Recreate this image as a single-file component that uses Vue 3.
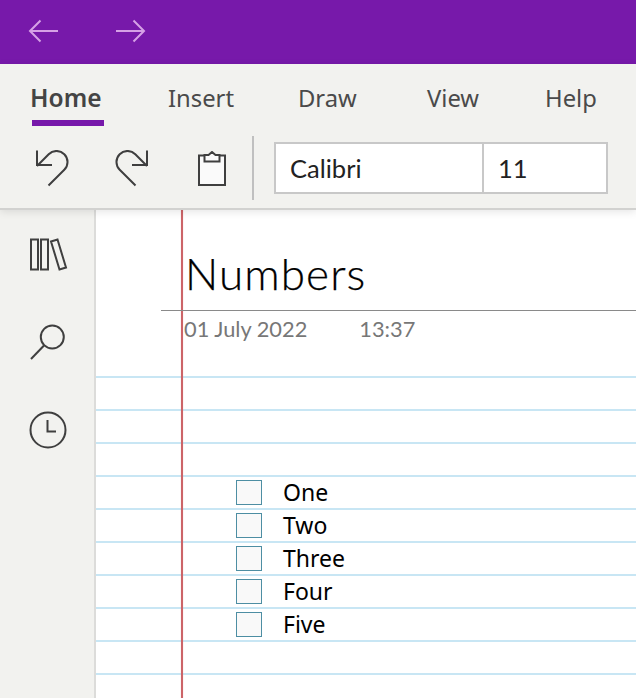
<script setup>
const tabs = [
  { name: 'Home', width: 138, active: true },
  { name: 'Insert', width: 130 },
  { name: 'Draw', width: 129 },
  { name: 'View', width: 118 },
  { name: 'Help', width: 60 },
];
const todos = ['One', 'Two', 'Three', 'Four', 'Five'];
</script>

<template>
  <div class="app">
    <header class="titlebar">
      <svg class="nav-icon" width="32" height="24" viewBox="0 0 32 24">
        <path d="M30 12H2M12.5 1.5L2 12l10.5 10.5" />
      </svg>
      <svg class="nav-icon" width="32" height="24" viewBox="0 0 32 24">
        <path d="M2 12h28M19.5 1.5L30 12 19.5 22.5" />
      </svg>
    </header>

    <section class="ribbon">
      <nav class="tabs">
        <div v-for="tab in tabs" :key="tab.name" class="tab" :class="{ active: tab.active }" :style="{ width: tab.width + 'px' }">
          <span class="tab-label">{{ tab.name }}</span>
        </div>
      </nav>
      <div class="tools">
        <svg class="tool" width="36" height="40" viewBox="0 0 36 40">
          <path d="M1 .5V15H16M1 16L12.700 4.200A11 11 0 0 1 28.300 19.800L12.500 35.500" />
        </svg>
        <svg class="tool redo" width="36" height="40" viewBox="0 0 36 40">
          <path d="M35 .5V15H20M35 16L23.300 4.200A11 11 0 0 0 7.700 19.800L23.500 35.500" />
        </svg>
        <svg class="tool clip" width="30" height="36" viewBox="0 0 30 36">
          <path class="paper" d="M7 4.500H1V34H27V4.500H21" />
          <path class="paper" d="M6.500 10.500V4H10.500L14 1l3.500 3H21.500V10.500z" />
        </svg>
        <div class="separator"></div>
        <div class="font-box">
          <div class="font-name">Calibri</div>
          <div class="font-size">11</div>
        </div>
      </div>
    </section>

    <main class="body">
      <aside class="sidebar">
        <svg width="40" height="36" viewBox="0 0 40 36">
          <path d="M1 1.500h7v30H1zM11 1.500h7v30H11zM21 3.500l6.500-2L36 29.500l-6.500 2z" />
        </svg>
        <svg class="search" width="40" height="40" viewBox="0 0 40 40">
          <circle cx="24.300" cy="14" r="11.500" />
          <path d="M16 22.500L3 36" />
        </svg>
        <svg class="clock" width="40" height="40" viewBox="0 0 40 40">
          <circle cx="20" cy="20" r="17.500" />
          <path d="M19.500 10v11.500H28" />
        </svg>
      </aside>

      <div class="page">
        <div class="margin-line"></div>
        <div class="page-head">
          <h1 class="title">Numbers</h1>
          <div class="meta">
            <span>01 July 2022</span>
            <span>13:37</span>
          </div>
        </div>
        <ul class="todo-list">
          <li v-for="item in todos" :key="item" class="todo">
            <span class="checkbox"></span>
            <span class="todo-text">{{ item }}</span>
          </li>
        </ul>
      </div>
    </main>
  </div>
</template>

<style>
html,
body {
  margin: 0;
  background: #fff;
}
</style>

<style scoped>
.app {
  width: 636px;
  height: 698px;
  overflow: hidden;
  display: flex;
  flex-direction: column;
  font-family: "Noto Sans", "Open Sans", sans-serif;
}

.titlebar {
  height: 64px;
  background: #7719aa;
  display: flex;
  align-items: center;
  gap: 54px;
  padding-left: 28px;
  box-sizing: border-box;
}

.nav-icon {
  margin-top: -2px;
}

.nav-icon path {
  fill: none;
  stroke: #d6a1e6;
  stroke-width: 2;
}

.ribbon {
  height: 146px;
  box-sizing: border-box;
  background: #f2f2ef;
  border-bottom: 2px solid #d2d2d0;
  position: relative;
  z-index: 1;
  box-shadow: 0 2px 8px rgba(0, 0, 0, 0.1);
}

.tabs {
  display: flex;
  height: 62px;
  padding-left: 30px;
  box-sizing: border-box;
}

.tab {
  font-size: 23.8px;
  line-height: 34px;
  padding-top: 17px;
  color: #4a4a4a;
}

.tab-label {
  display: inline-block;
  height: 45px;
  box-sizing: border-box;
  position: relative;
}

.tab.active .tab-label {
  font-weight: 600;
  font-size: 24.5px;
  color: #444;
}

.tab.active .tab-label::after {
  content: "";
  position: absolute;
  left: 2px;
  bottom: 0;
  width: 72px;
  height: 6px;
  background: #7719aa;
}

.tools {
  display: flex;
  align-items: flex-start;
  padding-left: 36px;
}

.tool path,
.sidebar path,
.sidebar circle {
  fill: none;
  stroke: #3f3f3f;
  stroke-width: 2;
}

.tool {
  margin-top: 24px;
  margin-right: 40px;
}

.tool.redo {
  margin-right: 50px;
}

.tool.clip {
  margin-top: 25px;
  margin-right: 24px;
}

.tool .paper {
  fill: #fafafa;
}

.separator {
  width: 2px;
  height: 64px;
  background: #c0c0c0;
  margin-top: 10px;
}

.font-box {
  display: flex;
  margin-top: 16px;
  margin-left: 20px;
  width: 334px;
  height: 52px;
  box-sizing: border-box;
  background: #fff;
  border: 2px solid #c8c8c8;
  font-family: Lato, "Liberation Sans", sans-serif;
  font-size: 25.5px;
  color: #222;
  line-height: 48px;
}

.font-name {
  width: 208px;
  padding-left: 14px;
  box-sizing: border-box;
  border-right: 2px solid #c8c8c8;
}

.font-size {
  padding-left: 14px;
}

.body {
  flex: 1;
  display: flex;
  min-height: 0;
}

.sidebar {
  width: 96px;
  box-sizing: border-box;
  background: #f2f2ef;
  border-right: 2px solid #dcdcda;
  padding: 28px 0 0 30px;
  display: flex;
  flex-direction: column;
  align-items: flex-start;
}

.sidebar .search {
  margin-top: 49px;
  margin-left: -2px;
}

.sidebar .clock {
  margin-top: 47px;
  margin-left: -2px;
}

.page {
  flex: 1;
  position: relative;
  overflow: hidden;
  background-color: #fff;
  background-image: linear-gradient(to bottom, #c8e6f4 0, #c8e6f4 2px, transparent 2px);
  background-size: 100% 33px;
  background-position: 0 1px;
}

.margin-line {
  position: absolute;
  top: 0;
  bottom: 0;
  left: 85px;
  width: 2px;
  background: #cc6468;
  box-shadow: 0 0 1px rgba(204, 100, 104, 0.6);
}

.page-head {
  height: 166px;
  background: #fff;
  padding: 36px 0 0 65px;
  box-sizing: border-box;
}

.title {
  margin: 0;
  padding: 0 0 9px 24px;
  border-bottom: 1px solid #8a8a8a;
  font-family: Lato, "Liberation Sans", sans-serif;
  font-weight: 300;
  -webkit-text-stroke: 0.25px #000;
  font-size: 44px;
  line-height: 55px;
  letter-spacing: 1.1px;
  color: #000;
  position: relative;
}

.meta {
  display: flex;
  gap: 52px;
  padding-left: 23px;
  margin-top: 2px;
  font-family: Lato, "Liberation Sans", sans-serif;
  font-size: 21.8px;
  line-height: 32px;
  color: #777;
  position: relative;
}

.todo-list {
  list-style: none;
  margin: 100px 0 0;
  padding: 0 0 0 140px;
  font-size: 23px;
  color: #000;
}

.todo {
  display: flex;
  align-items: center;
  gap: 21px;
  height: 33px;
}

.todo-text {
  padding-bottom: 2px;
}

.checkbox {
  width: 26px;
  height: 25px;
  box-sizing: border-box;
  background: #f9f9f9;
  border: 1px solid #4d8ea3;
}
</style>
